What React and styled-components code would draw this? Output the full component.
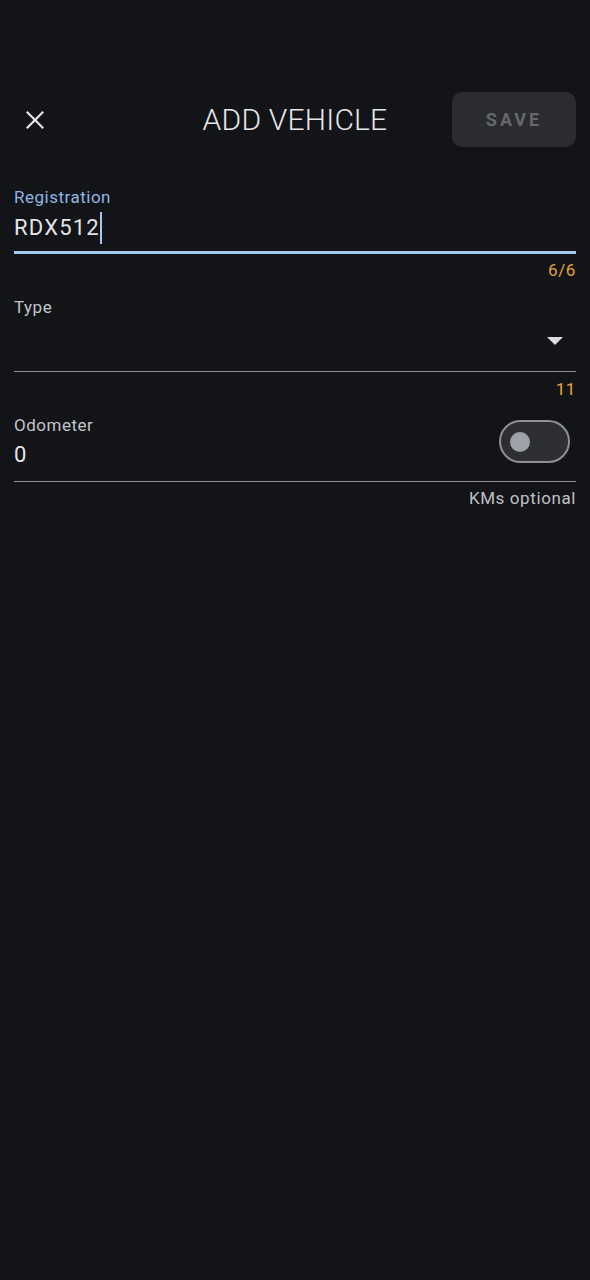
import React, { useState } from 'react';
import styled, { createGlobalStyle } from 'styled-components';

const GlobalStyle = createGlobalStyle`
  html, body {
    margin: 0;
    padding: 0;
    background: #121418;
    font-family: Roboto, "Noto Sans", sans-serif;
  }
`;

const Page = styled.div`
  min-height: 1280px;
  background: #121418;
  padding: 92px 14px 0 14px;
  box-sizing: border-box;
`;

const Header = styled.div`
  display: flex;
  align-items: center;
  justify-content: space-between;
  height: 55px;
  position: relative;
`;

const CloseButton = styled.button`
  background: none;
  border: none;
  padding: 0;
  margin-left: 12px;
  width: 18px;
  height: 18px;
  display: flex;
  align-items: center;
  justify-content: center;
  cursor: pointer;
`;

const Title = styled.h1`
  position: absolute;
  left: 0;
  right: 0;
  text-align: center;
  margin: 0;
  font-size: 30px;
  font-weight: 300;
  letter-spacing: 0.2px;
  color: #e6e6e8;
  pointer-events: none;
`;

const SaveButton = styled.button`
  width: 124px;
  height: 55px;
  border: none;
  border-radius: 10px;
  background: #2a2c30;
  color: #66686c;
  font-family: Roboto, sans-serif;
  font-weight: 700;
  font-size: 18px;
  letter-spacing: 3px;
`;

const Form = styled.div`
  display: flex;
  flex-direction: column;
  margin-top: 37px;
`;

const Field = styled.div`
  display: flex;
  flex-direction: column;
`;

const InputArea = styled.div`
  display: flex;
  align-items: flex-start;
  justify-content: space-between;
  padding-top: 3px;
  border-bottom: ${p => (p.$focused ? '3px solid #a6c8f0' : '1px solid #8c8e92')};
  height: ${p => p.$height}px;
  box-sizing: border-box;
`;

const Texts = styled.div`
  display: flex;
  flex-direction: column;
`;

const Label = styled.span`
  font-size: 17px;
  letter-spacing: 0.5px;
  color: ${p => (p.$focused ? '#8fb6e6' : '#c4c5c8')};
  line-height: 20px;
`;

const Value = styled.span`
  font-size: 22px;
  letter-spacing: 1.2px;
  color: #e4e4e6;
  line-height: 30px;
  margin-top: 5px;
  min-height: 30px;
  display: flex;
  align-items: center;
`;

const Caret = styled.span`
  display: inline-block;
  width: 2px;
  height: 32px;
  background: #a6c8f0;
`;

const Helper = styled.div`
  text-align: right;
  font-size: 17px;
  line-height: 20px;
  letter-spacing: 0.6px;
  color: ${p => (p.$accent ? '#e8a33a' : '#c0c1c4')};
  margin-top: ${p => p.$top}px;
  height: 20px;
  margin-bottom: ${p => p.$gap}px;
`;

const Arrow = styled.div`
  width: 0;
  height: 0;
  border-left: 8px solid transparent;
  border-right: 8px solid transparent;
  border-top: 8px solid #dcdcde;
  margin-right: 13px;
  margin-top: 40px;
`;

const Toggle = styled.button`
  width: 71px;
  height: 43px;
  border-radius: 22px;
  border: 2.5px solid #8e9095;
  background: #2d2f33;
  padding: 0 0 0 9px;
  display: flex;
  align-items: center;
  box-sizing: border-box;
  margin-right: 6px;
  margin-top: 5px;
  cursor: pointer;
`;

const Knob = styled.span`
  width: 20px;
  height: 20px;
  border-radius: 50%;
  background: #a0a2a9;
`;

export default function App() {
  const [registration] = useState('RDX512');

  return (
    <>
      <GlobalStyle />
      <Page>
        <Header>
          <CloseButton aria-label="close">
            <svg width="18" height="18" viewBox="0 0 18 18" fill="none" stroke="#e6e6e8" strokeWidth="2.2" strokeLinecap="square">
              <path d="M1.5 1.5 L16.5 16.5 M16.5 1.5 L1.5 16.5" />
            </svg>
          </CloseButton>
          <Title>ADD VEHICLE</Title>
          <SaveButton disabled>SAVE</SaveButton>
        </Header>

        <Form>
          <Field>
            <InputArea $focused $height={70}>
              <Texts>
                <Label $focused>Registration</Label>
                <Value>
                  {registration}
                  <Caret />
                </Value>
              </Texts>
            </InputArea>
            <Helper $accent $top={6} $gap={14}>6/6</Helper>
          </Field>

          <Field>
            <InputArea $height={78}>
              <Texts>
                <Label>Type</Label>
              </Texts>
              <Arrow />
            </InputArea>
            <Helper $accent $top={7} $gap={13}>11</Helper>
          </Field>

          <Field>
            <InputArea $height={70}>
              <Texts>
                <Label>Odometer</Label>
                <Value>0</Value>
              </Texts>
              <Toggle aria-label="toggle">
                <Knob />
              </Toggle>
            </InputArea>
            <Helper $top={6} $gap={0}>KMs optional</Helper>
          </Field>
        </Form>
      </Page>
    </>
  );
}
